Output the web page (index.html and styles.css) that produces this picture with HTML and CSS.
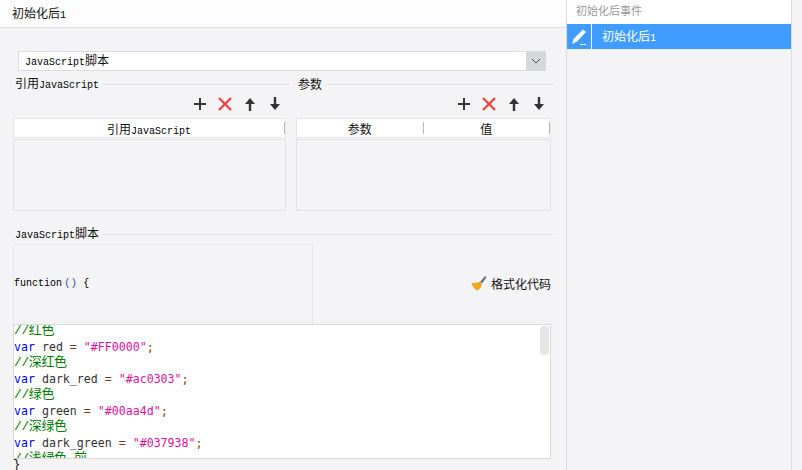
FILE: index.html
```html
<!DOCTYPE html>
<html lang="zh">
<head>
<meta charset="utf-8">
<title>初始化后1</title>
<link rel="stylesheet" href="styles.css">
</head>
<body>
<div class="app">
  <main class="main">
    <header class="topbar">初始化后<span class="lat">1</span></header>
    <div class="content">
      <div class="select">
        <span class="select-text"><span class="lat">JavaScript</span>脚本</span>
        <span class="select-btn"><svg width="10" height="6" viewBox="0 0 10 6"><path d="M1 1l4 4 4-4" fill="none" stroke="#555" stroke-width="1"/></svg></span>
      </div>
      <div class="columns">
        <section class="col col-left">
          <div class="legend"><span class="legend-text">引用<span class="lat">JavaScript</span></span></div>
          <div class="toolbar toolbar-left">
            <svg class="ico" viewBox="0 0 14 14"><path d="M7 1v12M1 7h12" stroke="#333" stroke-width="2" fill="none"/></svg>
            <svg class="ico" viewBox="0 0 14 14"><path d="M1 1l12 12M13 1L1 13" stroke="#ef4444" stroke-width="2.4" fill="none"/></svg>
            <svg class="ico" viewBox="0 0 14 14"><path d="M7 1L2 7h3.8v7h2.4V7H12z" fill="#333"/></svg>
            <svg class="ico" viewBox="0 0 14 14"><path d="M7 13L2 7h3.8V0h2.4v7H12z" fill="#333"/></svg>
          </div>
          <div class="tbl-head"><span class="th"><span>引用<span class="lat">JavaScript</span></span></span></div>
          <div class="tbl-body"></div>
        </section>
        <section class="col col-right">
          <div class="legend"><span class="legend-text">参数</span></div>
          <div class="toolbar">
            <svg class="ico" viewBox="0 0 14 14"><path d="M7 1v12M1 7h12" stroke="#333" stroke-width="2" fill="none"/></svg>
            <svg class="ico" viewBox="0 0 14 14"><path d="M1 1l12 12M13 1L1 13" stroke="#ef4444" stroke-width="2.4" fill="none"/></svg>
            <svg class="ico" viewBox="0 0 14 14"><path d="M7 1L2 7h3.8v7h2.4V7H12z" fill="#333"/></svg>
            <svg class="ico" viewBox="0 0 14 14"><path d="M7 13L2 7h3.8V0h2.4v7H12z" fill="#333"/></svg>
          </div>
          <div class="tbl-head"><span class="th">参数</span><span class="th">值</span></div>
          <div class="tbl-body"></div>
        </section>
      </div>
      <section class="script">
        <div class="legend"><span class="legend-text"><span class="lat">JavaScript</span>脚本</span></div>
        <div class="fn-row">
          <div class="fn-box"><span class="lat fn">function<span class="paren">()</span> {</span></div>
          <button class="format" type="button">
            <svg width="16" height="16" viewBox="0 0 16 16"><path d="M9 7l5-6 1.500 1.300L11 8.500z" fill="#6b7078"/><path d="M0.500 7.500C3 8.500 6 8 8.500 6.500L11 9c-.5 3-2.500 5.500-4.500 6.500C3.500 14.500 1 11 .5 7.500z" fill="#f0a81e"/></svg>
            <span>格式化代码</span>
          </button>
        </div>
        <div class="editor">
          <div class="thumb"></div>
          <div class="code">
            <div class="line c">//红色</div>
            <div class="line"><span class="k">var</span> red <span class="o">=</span> <span class="s">"#FF0000"</span><span class="o">;</span></div>
            <div class="line c">//深红色</div>
            <div class="line"><span class="k">var</span> dark_red <span class="o">=</span> <span class="s">"#ac0303"</span><span class="o">;</span></div>
            <div class="line c">//绿色</div>
            <div class="line"><span class="k">var</span> green <span class="o">=</span> <span class="s">"#00aa4d"</span><span class="o">;</span></div>
            <div class="line c">//深绿色</div>
            <div class="line"><span class="k">var</span> dark_green <span class="o">=</span> <span class="s">"#037938"</span><span class="o">;</span></div>
            <div class="line c">//浅绿色_前</div>
          </div>
        </div>
        <div class="closing">}</div>
      </section>
    </div>
  </main>
  <aside class="side">
    <div class="side-title">初始化后事件</div>
    <div class="side-item">
      <span class="side-icon"><svg width="16" height="16" viewBox="0 0 16 16"><path d="M12 .5l3 2.500L6 12.500 1 15l1.500-5z" fill="#fff"/><path d="M9 15.500h6" stroke="#fff" stroke-width="1"/></svg></span>
      <span class="side-label">初始化后<span class="lat">1</span></span>
    </div>
  </aside>
</div>
</body>
</html>
```
FILE: styles.css
```css
* { box-sizing: border-box; }
html, body { margin: 0; padding: 0; }
body {
  width: 802px;
  height: 470px;
  overflow: hidden;
  background: #f4f4f6;
  font-family: "Noto Sans CJK SC", "Liberation Sans", sans-serif;
  font-size: 12px;
  color: #111;
}
.lat { font-family: "Liberation Mono", monospace; font-size: 10px; color: #000; }
.app { display: flex; height: 470px; overflow: hidden; }
.main { width: 567px; flex: none; border-right: 1px solid #dcdcdf; overflow: hidden; }
.topbar {
  height: 28px;
  background: #fdfdfd;
  border-bottom: 1px solid #dcdcdf;
  padding-left: 12px;
  line-height: 25px;
}
.content { padding: 23px 15px 0 13px; display: flex; flex-direction: column; }
.select {
  width: 528px;
  height: 20px;
  margin-left: 5px;
  background: #fff;
  border: 1px solid #dcdcdf;
  border-right: 0;
  display: flex;
  justify-content: space-between;
  align-items: center;
}
.select-text { padding-left: 6px; line-height: 18px; }
.select-btn {
  width: 20px;
  height: 19px;
  background: #d6d7db;
  display: flex;
  align-items: center;
  justify-content: center;
}
.columns { display: flex; gap: 10px; width: 538px; margin-top: 5px; }
.col-left { width: 273px; }
.col-right { width: 255px; }
.legend {
  height: 16px;
  margin: 0 -3px;
  padding-left: 2px;
  display: flex;
  align-items: center;
  background: linear-gradient(#e2e2e6, #e2e2e6) center / 100% 1px no-repeat;
}
.legend-text { background: #f4f4f6; padding: 0 3px; line-height: 16px; }
.toolbar {
  height: 24px;
  display: flex;
  justify-content: flex-end;
  align-items: center;
  gap: 11px;
  padding-right: 5px;
}
.toolbar-left { padding-right: 4px; }
.ico { width: 14px; height: 14px; display: block; }
.tbl-head {
  height: 20px;
  margin-top: 2px;
  background: #fff;
  border: 1px solid #e6e6e9;
  display: flex;
}
.th {
  flex: 1;
  text-align: center;
  border-right: 1px solid #bdb9ac;
  margin: 3px 0;
  line-height: 13px;
}
.tbl-body {
  height: 72px;
  margin-top: 1px;
  border: 1px solid #e2e2e6;
}
.script { margin-top: 15px; width: 538px; }
.fn-row { display: flex; justify-content: space-between; align-items: center; margin-top: 2px; }
.fn-box {
  width: 300px;
  height: 80px;
  border: 1px solid #e8e8ea;
  border-bottom: 0;
  display: flex;
  align-items: center;
  padding-bottom: 4px;
}
.fn { font-size: 10px; }
.paren { color: #35579a; font-size: 11px; padding-left: 2px; }
.format {
  border: 0;
  padding: 0 0 2px;
  background: none;
  font: inherit;
  color: #111;
  display: flex;
  align-items: center;
  gap: 4px;
}
.editor {
  position: relative;
  height: 135px;
  width: 538px;
  background: #fff;
  border: 1px solid #d9d9dd;
  overflow: hidden;
}
.thumb {
  position: absolute;
  right: 1px;
  top: 1px;
  width: 9px;
  height: 29px;
  border-radius: 4px;
  background: #e6e6e6;
}
.code {
  margin-top: -2px;
  font-family: "DejaVu Sans Mono", "Noto Sans CJK SC", monospace;
  font-size: 11.6px;
  color: #333;
}
.line { height: 16px; line-height: 16px; white-space: pre; overflow: hidden; }
.c { color: #008000; font-family: "Liberation Mono", "Noto Sans CJK SC", monospace; font-size: 13px; letter-spacing: -0.4px; }
.k { color: #0000ff; }
.o { color: #7a3a20; }
.s { color: #e010a0; }
.closing { font-family: "Liberation Mono", monospace; font-size: 12px; line-height: 12px; }
.side { width: 225px; flex: none; border-right: 1px solid #dcdcdf; }
.side-title {
  height: 24px;
  background: #fff;
  color: #999;
  font-size: 11px;
  line-height: 20px;
  padding-left: 9px;
}
.side-item { height: 25px; background: #409dff; color: #fff; display: flex; align-items: center; }
.side-item .lat { color: #fff; }
.side-icon {
  width: 25px;
  height: 25px;
  border-right: 1px solid #fff;
  display: flex;
  align-items: center;
  justify-content: center;
}
.side-label { padding-left: 10px; padding-bottom: 2px; }
```
